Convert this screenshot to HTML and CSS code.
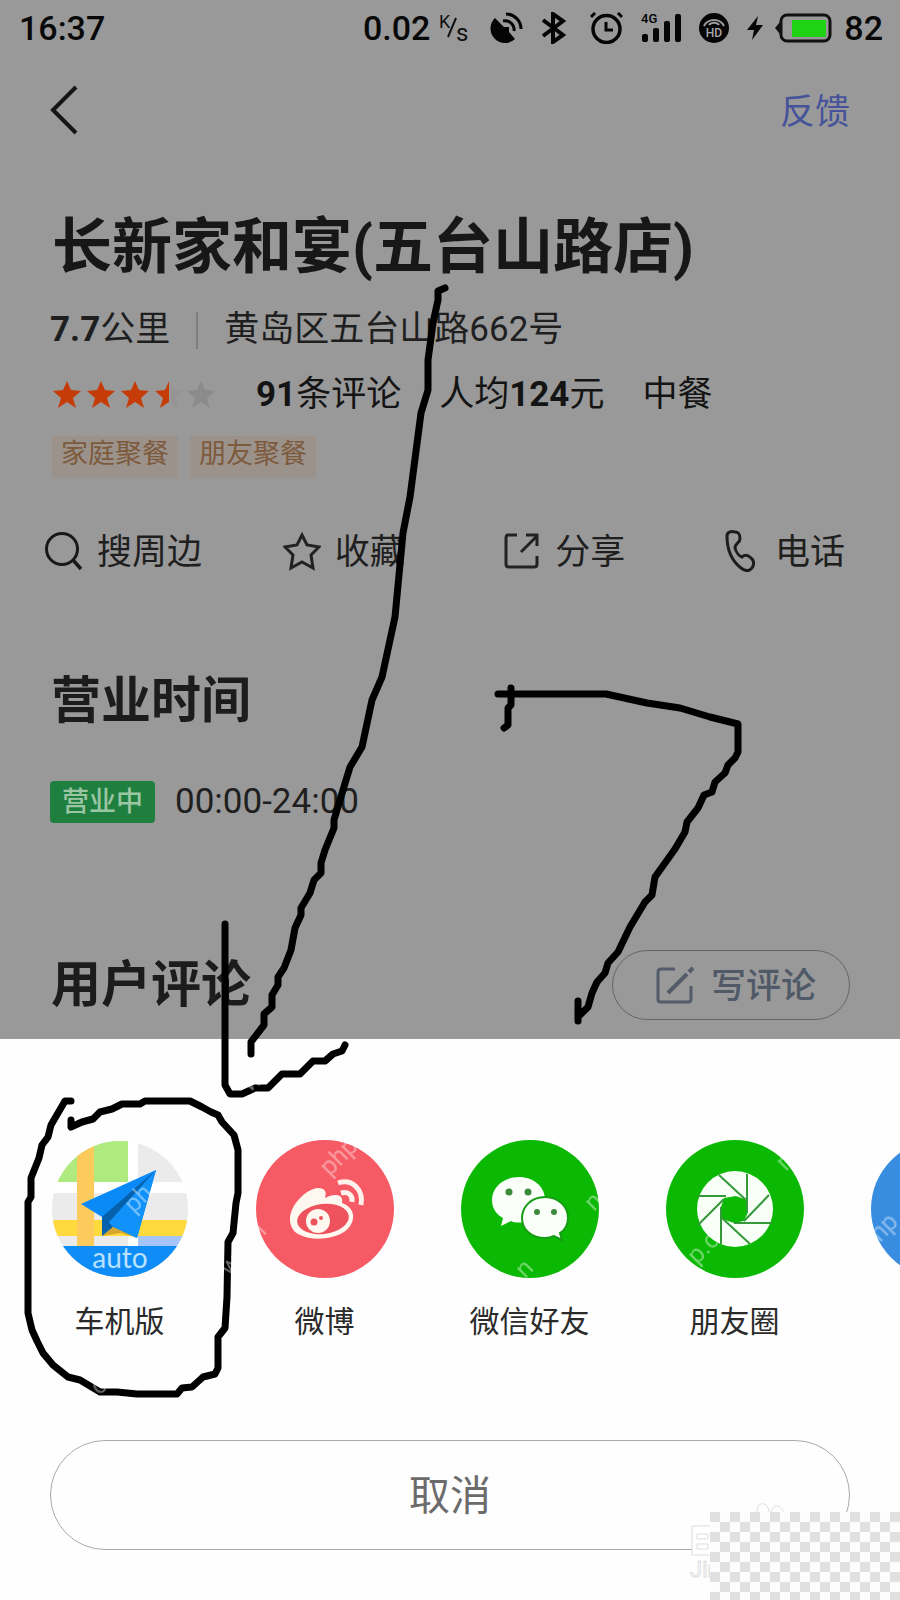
FILE: index.html
```
<!DOCTYPE html>
<html lang="zh-CN">
<head>
<meta charset="utf-8">
<meta name="viewport" content="width=device-width, initial-scale=1">
<title>长新家和宴(五台山路店)</title>
<link rel="stylesheet" href="styles.css">
</head>
<body>
<div class="screen">
  <div class="place">
    <div class="status">
      <span class="clock">16:37</span>
      <div class="indicators">
        <div class="speed">
          <span>0.02</span>
          <svg width="34" height="36" viewBox="0 0 34 36"><text class="speed-unit" x="1" y="18" font-size="18">K</text><path d="M18 8L10 27" stroke="#111" stroke-width="2"/><text class="speed-unit" x="18" y="31" font-size="24">s</text></svg>
        </div>
        <svg width="33" height="32" viewBox="0 0 33 32"><path d="M5 6L14 15L19 15L19 20L25 27A14 14 0 1 1 5 6Z" fill="#050505"/><path d="M13 9A9 9 0 0 1 24 19M16 2A15 15 0 0 1 31 17" fill="none" stroke="#050505" stroke-width="3"/></svg>
        <svg width="25" height="32" viewBox="0 0 25 32"><path d="M2 8L22 23L12 30V2L22 9L2 24" fill="none" stroke="#050505" stroke-width="4"/></svg>
        <svg class="alarm" width="33" height="32" viewBox="0 0 33 32"><circle cx="16.500" cy="17" r="13.500" fill="none" stroke="#050505" stroke-width="3.500"/><path d="M16 10V18H23M1 5L5 1M32 5L28 1" fill="none" stroke="#050505" stroke-width="3"/></svg>
        <svg width="40" height="32" viewBox="0 0 40 32"><g fill="#050505"><rect x="1" y="22" width="6" height="8" rx="2"/><rect x="12" y="16" width="6" height="14" rx="2"/><rect x="23" y="9" width="6" height="21" rx="2"/><rect x="34" y="2" width="6" height="28" rx="2"/></g><text class="tiny" x="0" y="11" font-size="13">4G</text></svg>
        <svg width="30" height="32" viewBox="0 0 30 32"><circle cx="15" cy="16" r="15" fill="#050505"/><path d="M5 14C9 6 21 6 25 14M10 13C12 10 18 10 20 13" fill="none" stroke="#999" stroke-width="2"/><text x="15" y="25" font-size="12" text-anchor="middle" class="hd">HD</text></svg>
        <div class="power">
          <svg width="16" height="32" viewBox="0 0 16 32"><path d="M11 4L0 18H7L5 28L16 13H9Z" fill="#050505"/></svg>
          <svg width="57" height="32" viewBox="0 0 57 32"><rect x="6" y="3" width="49" height="26" rx="6" fill="none" stroke="#111" stroke-width="3"/><path d="M5 10L0 16L5 22Z" fill="#111"/><rect x="17" y="8" width="34" height="17" fill="#1fd214"/></svg>
          <span>82</span>
        </div>
      </div>
    </div>

    <header class="topbar">
      <button class="back" type="button" aria-label="返回"><svg width="28" height="50" viewBox="0 0 28 50"><path d="M26 2L3 25L26 48" fill="none" stroke="#151515" stroke-width="4"/></svg></button>
      <a class="feedback" href="#feedback">反馈</a>
    </header>

    <h1>长新家和宴(五台山路店)</h1>
    <p class="line address"><span><b>7.7</b>公里</span><i class="divider"></i><span>黄岛区五台山路662号</span></p>
    <div class="line rating">
      <svg class="stars" width="162" height="28" viewBox="0 0 162 28" role="img" aria-label="3.5 星">
        <defs><path id="star" d="M13 0L17 9L27 10L19 17L22 27L13 21L4 27L7 17L-1 10L9 9Z"/></defs>
        <g fill="#c53c08"><use href="#star"/><use href="#star" x="34"/><use href="#star" x="68"/></g>
        <path d="M115 0V21L106 27L109 17L101 10L111 9Z" fill="#c53c08"/>
        <path d="M117 6L119 9L129 10L121 17L124 27L117 23Z" fill="#949494"/>
        <use href="#star" x="134" fill="#8b8b8b"/>
      </svg>
      <span><b>91</b>条评论</span><span>人均<b>124</b>元</span><span>中餐</span>
    </div>
    <div class="tags"><span>家庭聚餐</span><span>朋友聚餐</span></div>

    <nav class="actions">
      <button type="button"><svg width="38" height="40" viewBox="0 0 38 40"><circle cx="17" cy="18" r="15.500" fill="none" stroke="#181818" stroke-width="3"/><path d="M28 29L36 38" stroke="#181818" stroke-width="3.500"/></svg>搜周边</button>
      <button type="button"><svg width="38" height="40" viewBox="0 0 38 40"><path d="M19 4L24 14L36 16L28 24L30 37L19 31L8 37L10 24L2 16L14 14Z" fill="none" stroke="#222" stroke-width="3"/></svg>收藏</button>
      <button type="button"><svg width="38" height="40" viewBox="0 0 38 40"><path d="M14 4H5Q3 4 3 7V33Q3 36 6 36H31Q34 36 34 33V25M18 21L34 5M23 4H34V15" fill="none" stroke="#222" stroke-width="3"/></svg>分享</button>
      <button type="button"><svg width="30" height="42" viewBox="0 0 30 42"><path d="M2 6C2 2 6 1 10 2C14 2 15 4 15 9C15 13 10 13 10 18C11 22 14 26 17 27C20 24 23 25 26 28C30 31 29 36 26 39C23 42 20 41 16 38C7 31 2 19 2 6Z" fill="none" stroke="#1c1c1c" stroke-width="3"/></svg>电话</button>
    </nav>

    <h2 class="hours-title">营业时间</h2>
    <div class="hours"><span class="badge">营业中</span><span>00:00-24:00</span></div>

    <div class="reviews">
      <h2>用户评论</h2>
      <button class="write" type="button"><svg width="38" height="40" viewBox="0 0 38 40"><path d="M19 4H5Q2 4 2 7V34Q2 37 5 37H32Q35 37 35 34V21" fill="none" stroke="#535b68" stroke-width="3"/><path d="M12 28L31 9M33 7L37 3" fill="none" stroke="#535b68" stroke-width="4"/></svg>写评论</button>
    </div>
  </div>

  <div class="sheet">
    <div class="targets">
      <button type="button">
        <svg width="138" height="138" viewBox="0 0 138 138">
          <defs><clipPath id="disc"><circle cx="69" cy="69" r="68"/></clipPath></defs>
          <g clip-path="url(#disc)">
            <rect width="138" height="138" fill="#ebebeb"/><rect width="77" height="42" fill="#aeea7e"/>
            <path d="M0 42H138V53H0ZM77 0H87V106H77Z" fill="#fff"/>
            <rect y="80" width="138" height="16" fill="#ffda3d"/><rect x="87" y="96" width="51" height="10" fill="#a5c4f7"/>
            <rect x="26" width="17" height="106" fill="#fdca5c"/><rect y="106" width="138" height="32" fill="#0f8df6"/>
          </g>
          <path d="M51 96L62 87L86 98L70 93Z" fill="#d8a62c"/>
          <path d="M105 30L30 64L51 77L62 87L86 98Z" fill="#0a8af7"/><path d="M105 30L51 77V96L62 87L58 82Z" fill="#0561ac"/><path d="M105 30L58 83L86 98Z" fill="#1192fb"/>
          <text class="auto" x="69" y="128" text-anchor="middle">auto</text>
        </svg>
        <span>车机版</span>
      </button>
      <button type="button">
        <svg width="138" height="138" viewBox="0 0 138 138"><circle cx="69" cy="69" r="69" fill="#f65a64"/>
          <path d="M34 79C34 65 50 49 62 48C69 48 71 52 69 58C78 53 88 54 86 63C103 69 98 86 88 92C75 100 54 101 42 94C37 91 34 86 34 79Z" fill="#fff8f0"/>
          <ellipse cx="67" cy="79" rx="26" ry="15" transform="rotate(-7 67 79)" fill="#ee535d"/><circle cx="62" cy="81" r="12" fill="#fff8f0"/><circle cx="58" cy="82" r="3.500" fill="#ee535d"/><circle cx="65" cy="78" r="2" fill="#ee535d"/>
          <path d="M82 43C96 38 108 50 105 65M85 53C92 51 97 55 96 62" fill="none" stroke="#fff0ec" stroke-width="5"/></svg>
        <span>微博</span>
      </button>
      <button type="button">
        <svg width="138" height="138" viewBox="0 0 138 138"><circle cx="69" cy="69" r="69" fill="#0bb904"/>
          <path d="M58 37C43 37 31 47 31 60C31 68 35 74 42 78L40 86L50 81C53 83 62 83 67 81C80 79 85 69 84 58C83 46 72 37 58 37Z" fill="#fbfffa"/>
          <path d="M84 57C70 57 61 67 61 78C61 90 71 98 84 98C88 98 91 97 93 96L101 100L99 93C104 90 107 85 107 78C107 67 98 57 84 57Z" fill="#fbfffa" stroke="#179b16" stroke-width="2"/>
          <g fill="#3d8a3b"><circle cx="48" cy="52" r="3.500"/><circle cx="67" cy="52" r="3.500"/><circle cx="76" cy="72" r="3"/><circle cx="93" cy="72" r="3"/></g></svg>
        <span>微信好友</span>
      </button>
      <button type="button">
        <svg width="138" height="138" viewBox="0 0 138 138"><circle cx="69" cy="69" r="69" fill="#0bb904"/><circle cx="69" cy="69" r="38" fill="#f8fff6"/>
          <path d="M58 58L70 56L81 60L82 72L78 81L68 83L56 79L55 67Z" fill="#0bb904"/>
          <path d="M53 35L81 61M81 34V72M103 55L78 81M106 83H68M84 104L56 78M55 104V67M32 85L58 59M32 56H60" fill="none" stroke="#34993a" stroke-width="2"/></svg>
        <span>朋友圈</span>
      </button>
      <button type="button" aria-label="更多"><svg width="138" height="138" viewBox="0 0 138 138"><circle cx="69" cy="69" r="69" fill="#388de0"/></svg></button>
    </div>
    <button class="cancel" type="button">取消</button>
  </div>

  <svg class="ink" viewBox="0 0 900 1600" preserveAspectRatio="none" aria-hidden="true">
    <g fill="none" stroke="#000" stroke-width="7" stroke-linecap="round" stroke-linejoin="round">
      <path d="M445 288L438 291L438 300L433 323L428 360L428 390L421 413L410 497L403 533L395 617L382 677L372 700L362 747L350 767L343 790L334 820L334 828L325 850L321 863V873L314 880L310 893L301 908V915L295 928L291 950L284 968L278 977V985L272 995V1007L264 1014V1025L251 1042V1054"/>
      <path d="M225 924V1085L230 1094H242L255 1088H268L282 1074H300L313 1061H325L333 1054L342 1051L345 1045"/>
      <path d="M498 694H606L647 703L680 708L710 717L738 724V752L735 758L728 765L725 773L715 782L712 792L704 795L698 808L687 822L685 832L675 849L655 877L652 895L645 902L630 927L618 952L608 963L605 973L597 982L592 993L588 1007L578 1017V1001V1021"/>
      <path d="M511 688V705L508 708V725L504 728"/>
      <path d="M71 1101H65L58 1113L51 1125L48 1137L42 1145L39 1158L31 1178V1197L28 1202V1313L32 1330L37 1341L43 1353L53 1365L68 1377L80 1380L100 1392H117L137 1394H177L182 1388L192 1387L203 1377L215 1374L218 1368V1337L225 1328L227 1297L228 1242L233 1233L236 1203L238 1193V1150L234 1135L222 1122L218 1115L211 1112L202 1107L190 1101H145L140 1104H122L112 1109L100 1112L93 1119L82 1122L71 1127V1120"/>
    </g>
    <g class="mark">
      <text transform="translate(134 1214) rotate(-45)">ph</text>
      <text transform="translate(330 1177) rotate(-45)">php</text>
      <text transform="translate(258 1242) rotate(-45)">n</text>
      <text transform="translate(229 1277) rotate(-45)">w</text>
      <text transform="translate(594 1212) rotate(-45)">n</text>
      <text transform="translate(525 1279) rotate(-45)">n</text>
      <text transform="translate(697 1265) rotate(-45)">p.c</text>
      <text transform="translate(786 1172) rotate(-45)">n</text>
      <text transform="translate(880 1243) rotate(-45)">np</text>
      <text transform="translate(98 1396) rotate(-35)">or</text>
      <text transform="translate(249 1093) rotate(-35)">w</text>
    </g>
    <g fill="#fff" stroke="#ddd" stroke-width="1">
      <path d="M692 1526H712V1555H692Z"/><path d="M697 1534H708V1539H697ZM697 1544H708V1549H697Z"/>
      <path d="M757 1512C757 1501 768 1501 769 1512M771 1512C773 1504 781 1504 783 1512" fill="none"/>
      <text class="ghost" x="690" y="1577">Jin</text>
    </g>
  </svg>
  <div class="checker"></div>
</div>
</body>
</html>
```
FILE: styles.css
```
* { box-sizing: border-box; }

body {
  margin: 0;
  background: #fefefe;
  font-family: Roboto, "Noto Sans CJK SC", sans-serif;
  font-size: 35px;
  line-height: 48px;
  color: #1f1f1f;
}

h1, h2, p { margin: 0; }
svg { display: block; flex: none; }

button {
  padding: 0;
  border: 0;
  background: none;
  font: inherit;
  color: inherit;
  cursor: pointer;
}

.screen {
  position: relative;
  overflow: hidden;
}

.place {
  padding-bottom: 19px;
  background: #999;
}

/* status bar */
.status {
  display: flex;
  align-items: center;
  justify-content: space-between;
  height: 56px;
  padding: 0 17px 0 19px;
  font-size: 34px;
  font-weight: 500;
  color: #080808;
}

.indicators { display: flex; align-items: center; gap: 18px; }
.speed { display: flex; align-items: center; gap: 8px; }
.power { display: flex; align-items: center; gap: 12px; }
.alarm { margin-left: 6px; }
.speed-unit { font-family: Roboto, sans-serif; font-weight: 400; fill: #111; }
.tiny { font-family: Roboto, sans-serif; font-weight: 500; }
.hd { font-family: Roboto, sans-serif; font-weight: 500; fill: #aaa; }

/* header */
.topbar {
  display: flex;
  align-items: center;
  justify-content: space-between;
  height: 108px;
  padding: 0 50px;
}

.feedback { padding-top: 6px; color: #46539a; text-decoration: none; }

/* place summary */
h1 {
  margin-top: 42px;
  padding: 0 52px;
  font-size: 60px;
  font-weight: 700;
  line-height: 84px;
  color: #171717;
}

.line {
  display: flex;
  align-items: center;
  padding: 0 50px;
}

.address { margin-top: 16px; }
.divider { width: 2px; height: 37px; margin: 0 26px; background: #7d7d7d; }
.rating { gap: 38px; margin-top: 17px; color: #141414; }
.stars { margin: 0 2px 0 4px; overflow: visible; }

.tags {
  display: flex;
  gap: 12px;
  margin-top: 17px;
  padding: 0 52px;
  font-size: 27px;
  line-height: 36px;
  color: #7d5a3c;
}

.tags span { padding: 0 9px 6px; background: #9b928b; }

.actions {
  display: grid;
  grid-template-columns: 238fr 221fr 222fr 119fr;
  margin-top: 51px;
  padding: 0 55px 0 45px;
}

.actions button {
  display: flex;
  align-items: center;
  gap: 14px;
  white-space: nowrap;
}

.actions svg, .write svg { margin-bottom: 4px; }
.actions button:last-child { gap: 20px; }

h2 {
  font-size: 50px;
  font-weight: 700;
  line-height: 70px;
  color: #1c1c1c;
}

.hours-title { margin-top: 89px; padding: 0 51px; }

.hours {
  display: flex;
  align-items: center;
  gap: 20px;
  margin-top: 45px;
  padding: 0 50px;
  line-height: 42px;
}

.badge {
  padding: 0 12px;
  border-radius: 4px;
  background: #1f7f3f;
  font-size: 27px;
  font-weight: 500;
  color: #9cc5a4;
}

.reviews {
  display: flex;
  align-items: center;
  justify-content: space-between;
  margin-top: 127px;
  padding: 0 50px 0 51px;
}

.write {
  display: flex;
  align-items: center;
  justify-content: center;
  gap: 17px;
  width: 238px;
  height: 70px;
  padding: 4px 0 0 10px;
  border: 1px solid #666;
  border-radius: 35px;
  font-weight: 500;
  color: #505967;
}

/* share sheet */
.sheet { padding: 101px 0 50px; background: #fefefe; }

.targets {
  display: flex;
  padding-left: 17px;
  overflow: hidden;
}

.targets button {
  display: flex;
  flex: 0 0 205px;
  flex-direction: column;
  align-items: center;
  gap: 22px;
  font-size: 30px;
  line-height: 44px;
  color: #2b2b2b;
}

.auto { font-family: Lato, sans-serif; font-size: 28px; fill: #b9e2ff; }

.cancel {
  display: block;
  width: calc(100% - 100px);
  height: 110px;
  margin: 96px 50px 0;
  padding-top: 2px;
  border: 1px solid #aaa;
  border-radius: 55px;
  font-size: 41px;
  color: #6b6b6b;
}

/* drawn marks above the page */
.ink {
  position: absolute;
  inset: 0;
  width: 100%;
  height: 100%;
  pointer-events: none;
}

.mark { font-family: Roboto, sans-serif; font-size: 25px; fill: #fff; opacity: 0.4; }
.ghost { font-family: Roboto, sans-serif; font-size: 22px; }

.checker {
  position: absolute;
  right: 0;
  bottom: 0;
  width: 190px;
  height: 88px;
  background: repeating-conic-gradient(#fdfdfd 0 25%, #e0e0e0 0 50%) 0 0 / 20px 20px;
  pointer-events: none;
}
```
